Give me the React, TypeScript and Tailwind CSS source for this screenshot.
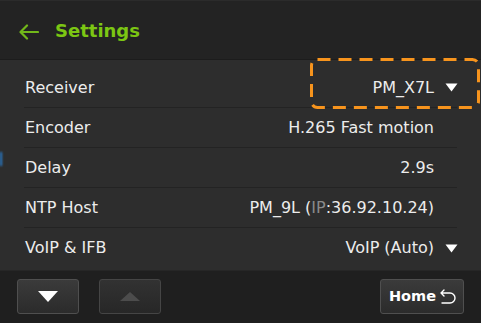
import React from 'react';

type Row = {
  label: string;
  value: React.ReactNode;
  dropdown?: boolean;
};

function Caret({ className = '' }: { className?: string }) {
  return (
    <svg width="13" height="9" viewBox="0 0 13 9" className={className}>
      <path d="M0.5 0.5 H12.5 L6.5 8.5 Z" fill="currentColor" />
    </svg>
  );
}

export default function App() {
  const rows: Row[] = [
    { label: 'Receiver', value: 'PM_X7L', dropdown: true },
    { label: 'Encoder', value: 'H.265 Fast motion' },
    { label: 'Delay', value: '2.9s' },
    {
      label: 'NTP Host',
      value: (
        <>
          PM_9L (<span className="text-[#8a8a8a]">IP</span>:36.92.10.24)
        </>
      ),
    },
    { label: 'VoIP & IFB', value: 'VoIP (Auto)', dropdown: true },
  ];

  return (
    <div
      className="relative w-[481px] h-[323px] overflow-hidden bg-[#2d2d2d] flex flex-col text-[#ececec]"
      style={{ fontFamily: '"DejaVu Sans", Verdana, sans-serif' }}
    >
      {/* Header */}
      <div className="h-[60px] shrink-0 bg-[#232323] border-t border-[#2b2b2b] border-b border-b-[#1c1c1c] flex items-center pt-[3px] pl-[19px] gap-[16px]">
        <svg width="20" height="16" viewBox="0 0 20 16" className="text-[#72b81a]">
          <path
            d="M19 8 H2 M8 1.5 L1.5 8 L8 14.5"
            fill="none"
            stroke="currentColor"
            strokeWidth="2.2"
            strokeLinecap="round"
            strokeLinejoin="round"
          />
        </svg>
        <span className="text-[18px] font-bold text-[#7cc613] leading-none -mt-[2px]">Settings</span>
      </div>

      {/* Rows */}
      <div className="flex-1 flex flex-col pt-[8px] mx-[24px]">
        {rows.map((row, i) => (
          <div
            key={row.label}
            className={
              'h-[40px] shrink-0 flex items-center justify-between pl-[1px] text-[16px] ' +
              (i < rows.length - 1 ? 'border-b border-[#232323]' : '')
            }
          >
            <span>{row.label}</span>
            <div className="flex items-center">
              <span>{row.value}</span>
              <span className="w-[23px] flex justify-end">
                {row.dropdown && <Caret className="text-white mr-[-1px]" />}
              </span>
            </div>
          </div>
        ))}
      </div>

      {/* Footer */}
      <div className="h-[53px] shrink-0 bg-[#1f1f1f] border-t border-[#262626] flex items-start pt-[8px] px-[17px]">
        <button className="w-[62px] h-[35px] rounded-[3px] border border-[#4f4f4f] bg-gradient-to-b from-[#3b3b3b] to-[#2b2b2b] flex items-center justify-center">
          <svg width="20" height="11" viewBox="0 0 20 11">
            <path d="M0 0 H20 L10 11 Z" fill="#ffffff" />
          </svg>
        </button>
        <button className="ml-[20px] w-[62px] h-[35px] rounded-[3px] border border-[#454545] bg-gradient-to-b from-[#323232] to-[#272727] flex items-center justify-center">
          <svg width="20" height="9" viewBox="0 0 20 9">
            <path d="M10 0 L20 9 H0 Z" fill="#4c4c4c" />
          </svg>
        </button>
        <button className="ml-auto w-[84px] h-[35px] rounded-[3px] border border-[#4f4f4f] bg-gradient-to-b from-[#3b3b3b] to-[#2b2b2b] flex items-center justify-center gap-[2px] pl-[3px]">
          <span className="text-[14.5px] font-bold text-white">Home</span>
          <svg width="20" height="20" viewBox="0 0 20 20">
            <path
              d="M6 3 L3 6 L6 9 M3 6 H12 A5 5 0 0 1 12 16 H4"
              fill="none"
              stroke="#ffffff"
              strokeWidth="1.4"
              strokeLinecap="round"
              strokeLinejoin="round"
            />
          </svg>
        </button>
      </div>

      {/* Focus highlight on Receiver */}
      <svg className="absolute left-[310px] top-[58px]" width="170" height="51" viewBox="0 0 170 51">
        <rect
          x="1.5"
          y="1.5"
          width="167"
          height="48"
          rx="6"
          fill="none"
          stroke="#f7941d"
          strokeWidth="3"
          strokeDasharray="13 8"
        />
      </svg>

      {/* left edge glow */}
      <div className="absolute left-0 top-[152px] w-[2px] h-[14px] bg-[#2a7fd0] blur-[1px]" />
    </div>
  );
}
